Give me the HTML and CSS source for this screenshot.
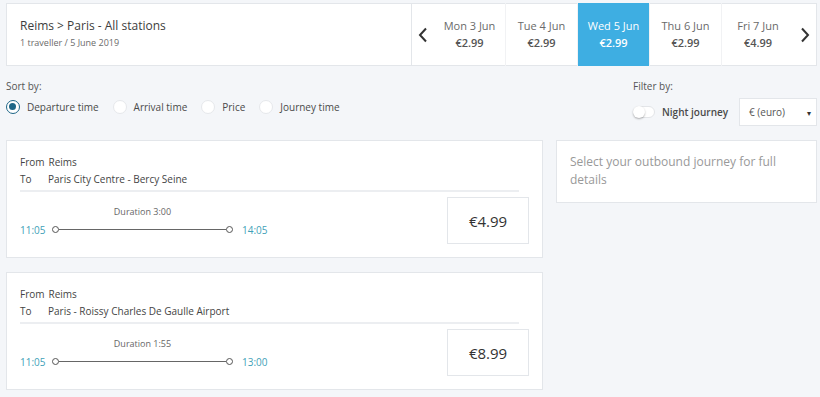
FILE: index.html
```html
<!DOCTYPE html>
<html lang="en">
<head>
  <meta charset="UTF-8">
  <meta name="viewport" content="width=device-width, initial-scale=1.0">
  <title>Reims to Paris</title>
  <link rel="stylesheet" href="styles.css">
</head>
<body>
  <div class="page">

    <!-- Search summary and date picker -->
    <div class="header">
      <div class="summary">
        <div class="route">Reims &gt; Paris - All stations</div>
        <div class="meta">1 traveller / 5 June 2019</div>
      </div>
      <div class="dates">
        <button class="arrow">
          <svg width="10" height="16" viewBox="0 0 10 16"><polyline points="8,1.5 2,8 8,14.5" fill="none" stroke="#333" stroke-width="2"/></svg>
        </button>
        <div class="day"><span class="day-name">Mon 3 Jun</span><span class="day-price">€2.99</span></div>
        <div class="day"><span class="day-name">Tue 4 Jun</span><span class="day-price">€2.99</span></div>
        <div class="day active"><span class="day-name">Wed 5 Jun</span><span class="day-price">€2.99</span></div>
        <div class="day"><span class="day-name">Thu 6 Jun</span><span class="day-price">€2.99</span></div>
        <div class="day"><span class="day-name">Fri 7 Jun</span><span class="day-price">€4.99</span></div>
        <button class="arrow">
          <svg width="10" height="16" viewBox="0 0 10 16"><polyline points="2,1.5 8,8 2,14.5" fill="none" stroke="#333" stroke-width="2"/></svg>
        </button>
      </div>
    </div>

    <!-- Sorting and filters -->
    <div class="toolbar">
      <div class="sort">
        <div class="label">Sort by:</div>
        <div class="options">
          <label class="option"><span class="radio checked"></span>Departure time</label>
          <label class="option"><span class="radio"></span>Arrival time</label>
          <label class="option"><span class="radio"></span>Price</label>
          <label class="option"><span class="radio"></span>Journey time</label>
        </div>
      </div>
      <div class="filter">
        <div class="label">Filter by:</div>
        <div class="filter-row">
          <span class="toggle"><span class="knob"></span></span>
          <span class="night">Night journey</span>
          <div class="select">€ (euro)<span class="caret">▾</span></div>
        </div>
      </div>
    </div>

    <!-- Results -->
    <div class="main">
      <div class="results">
        <div class="card">
          <div class="stations">
            <div class="station"><span class="st-label">From</span>Reims</div>
            <div class="station"><span class="st-label to">To</span>Paris City Centre - Bercy Seine</div>
          </div>
          <div class="journey">
            <div class="times">
              <span class="time">11:05</span>
              <div class="line">
                <span class="duration">Duration 3:00</span>
                <span class="dot"></span><span class="bar"></span><span class="dot"></span>
              </div>
              <span class="time">14:05</span>
            </div>
            <div class="price">€4.99</div>
          </div>
        </div>

        <div class="card">
          <div class="stations">
            <div class="station"><span class="st-label">From</span>Reims</div>
            <div class="station"><span class="st-label to">To</span>Paris - Roissy Charles De Gaulle Airport</div>
          </div>
          <div class="journey">
            <div class="times">
              <span class="time">11:05</span>
              <div class="line">
                <span class="duration">Duration 1:55</span>
                <span class="dot"></span><span class="bar"></span><span class="dot"></span>
              </div>
              <span class="time">13:00</span>
            </div>
            <div class="price">€8.99</div>
          </div>
        </div>
      </div>

      <div class="details">Select your outbound journey for full details</div>
    </div>

  </div>
</body>
</html>
```

FILE: styles.css
```css
* {
  margin: 0;
  padding: 0;
  box-sizing: border-box;
}

body {
  font-family: "Open Sans", "Liberation Sans", sans-serif;
  background-color: #f4f6f9;
  color: #4a4a4a;
  font-size: 11px;
}

.page {
  padding: 3px 3px 0 6px;
}

/* Cabecalho com resumo e datas */
.header {
  display: flex;
  height: 63px;
  background: #fff;
  border: 1px solid #e3e6ea;
}

.summary {
  width: 405px;
  padding: 14px 13px;
  border-right: 1px solid #e3e6ea;
}

.route {
  font-size: 12px;
  color: #3d3d3d;
  line-height: 16px;
}

.meta {
  font-size: 9px;
  color: #6b6b6b;
  margin-top: 2px;
}

.dates {
  flex: 1;
  display: flex;
}

.arrow {
  width: 22px;
  background: none;
  border: none;
  display: flex;
  align-items: center;
  justify-content: center;
}

.day {
  width: 72px;
  display: flex;
  flex-direction: column;
  align-items: center;
  justify-content: center;
  gap: 2px;
  padding-bottom: 2px;
  border-right: 1px solid #f1f2f4;
  margin: -1px 0;
}

.day:nth-child(6) {
  border-right: none;
}

.day-name {
  font-size: 11px;
  color: #6a6a6a;
}

.day-price {
  font-size: 11px;
  font-weight: 600;
  color: #555;
}

.day.active {
  background: #3eaee2;
}

.day.active .day-name,
.day.active .day-price {
  color: #fff;
}

/* Barra de ordenacao */
.toolbar {
  display: flex;
  justify-content: space-between;
  padding-top: 13px;
  height: 74px;
}

.label {
  font-size: 10px;
  color: #555;
  line-height: 14px;
}

.options {
  display: flex;
  align-items: center;
  margin-top: 7px;
}

.option {
  display: flex;
  align-items: center;
  font-size: 10px;
  color: #4a4a4a;
  margin-right: 14px;
}

.radio {
  width: 14px;
  height: 14px;
  border-radius: 50%;
  background: #fff;
  border: 1px solid #e6e8eb;
  margin-right: 7px;
  position: relative;
}

.radio.checked {
  border: 1.5px solid #1e6687;
}

.radio.checked::after {
  content: "";
  position: absolute;
  top: 2px;
  left: 2px;
  width: 7px;
  height: 7px;
  border-radius: 50%;
  background: #1e6687;
}

.filter {
  width: 184px;
}

.filter-row {
  display: flex;
  align-items: center;
  margin-top: 5px;
}

.toggle {
  width: 22px;
  height: 12px;
  border-radius: 6px;
  background: #fff;
  border: 1px solid #e3e5e8;
  position: relative;
}

.knob {
  position: absolute;
  left: -1px;
  top: -1px;
  width: 12px;
  height: 12px;
  border-radius: 50%;
  background: #fff;
  box-shadow: 0 1px 2px rgba(0, 0, 0, 0.3);
}

.night {
  font-size: 10px;
  font-weight: 600;
  color: #4a4a4a;
  margin-left: 7px;
  width: 77px;
}

.select {
  width: 78px;
  height: 28px;
  background: #fff;
  border: 1px solid #e3e6ea;
  font-size: 10px;
  color: #555;
  display: flex;
  align-items: center;
  padding-left: 9px;
  position: relative;
}

.caret {
  position: absolute;
  right: 5px;
  font-size: 8px;
  color: #333;
}

/* Resultados */
.main {
  display: grid;
  grid-template-columns: 537px 261px;
  gap: 13px;
  align-items: start;
}

.results {
  display: flex;
  flex-direction: column;
  gap: 14px;
}

.card {
  background: #fff;
  border: 1px solid #e3e6ea;
  height: 118px;
  padding: 13px 13px 0 13px;
}

.stations {
  border-bottom: 2px solid #eceef1;
  padding-bottom: 2px;
  margin-right: 10px;
}

.station {
  font-size: 10px;
  line-height: 17px;
  color: #444;
}

.st-label {
  margin-right: 4px;
}

.st-label.to {
  display: inline-block;
  width: 24px;
}

.journey {
  display: flex;
  justify-content: space-between;
  align-items: center;
  margin-top: 5px;
}

.times {
  display: flex;
  align-items: center;
  padding-top: 18px;
}

.time {
  font-size: 10px;
  color: #3f9fb8;
  width: 32px;
}

.line {
  display: flex;
  align-items: center;
  position: relative;
  width: 181px;
  margin-right: 9px;
}

.duration {
  position: absolute;
  top: -21px;
  left: 0;
  right: 0;
  text-align: center;
  font-size: 9px;
  color: #666;
}

.dot {
  width: 7px;
  height: 7px;
  border-radius: 50%;
  border: 1px solid #555;
  background: #fff;
}

.bar {
  flex: 1;
  height: 1px;
  background: #666;
}

.price {
  width: 82px;
  height: 47px;
  border: 1px solid #e3e6ea;
  display: flex;
  align-items: center;
  justify-content: center;
  font-size: 15px;
  color: #333;
}

.details {
  background: #fff;
  border: 1px solid #e3e6ea;
  padding: 12px 13px;
  font-size: 12px;
  line-height: 18px;
  color: #999;
  height: 63px;
}
```
